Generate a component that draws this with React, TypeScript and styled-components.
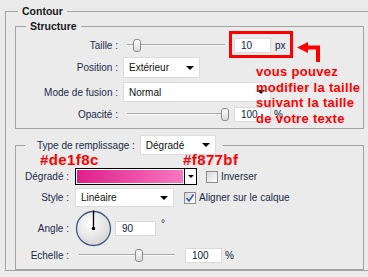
import React from 'react';
import styled, { createGlobalStyle } from 'styled-components';

const GlobalStyle = createGlobalStyle`
    html, body {
        margin: 0;
        padding: 0;
        background: #ebebeb;
        overflow: hidden;
    }
    body {
        font-family: 'Liberation Sans', Arial, sans-serif;
        font-size: 10px;
        color: #1b2a4a;
    }
`;

const Page = styled.div`
    position: relative;
    width: 368px;
    height: 277px;
    padding-top: 4px;
    box-sizing: border-box;
    overflow: hidden;
`;

const Outer = styled.fieldset`
    margin: 0 0 0 5px;
    padding: 1px 0 0 9px;
    width: 372px;
    box-sizing: border-box;
    border: 1px solid #a3a3a3;
    min-inline-size: 0;
`;

const Group = styled.fieldset<{ $top?: number; $bottom?: number }>`
    margin: ${p => p.$top || 0}px 0 0 0;
    padding: 0 0 ${p => p.$bottom || 0}px 0;
    width: 349px;
    box-sizing: border-box;
    border: 1px solid #a3a3a3;
    min-inline-size: 0;
`;

const Legend = styled.legend<{ $indent: number }>`
    margin-left: ${p => p.$indent}px;
    padding: 0 4px;
    font-weight: bold;
    font-size: 10.5px;
    line-height: 14px;
    color: #1a1a1a;
`;

const FillLegend = styled.legend`
    margin-left: 9px;
    padding: 0 7px 0 12px;
    display: flex;
    align-items: center;
    gap: 5px;
    height: 20px;
`;

const Row = styled.div<{ $h: number; $mt: number }>`
    display: flex;
    align-items: center;
    height: ${p => p.$h}px;
    margin-top: ${p => p.$mt}px;
`;

const Label = styled.span<{ $w: number }>`
    flex-shrink: 0;
    width: ${p => p.$w}px;
    margin-right: ${p => (p.$w > 80 ? 5 : 6)}px;
    text-align: right;
    white-space: nowrap;
`;

const SliderBox = styled.div<{ $w: number }>`
    position: relative;
    width: ${p => p.$w}px;
    height: 15px;
    flex-shrink: 0;
`;

const Track = styled.div`
    position: absolute;
    left: 4px;
    right: 4px;
    top: 6px;
    height: 1px;
    background: #a9a9a9;
    border-bottom: 1px solid #fafafa;
`;

const Thumb = styled.div`
    position: absolute;
    top: 1px;
    width: 8px;
    height: 13px;
    box-sizing: border-box;
    border: 1px solid #8c8c8c;
    border-radius: 3px;
    background: linear-gradient(#ffffff, #d9d9d9);
`;

const Field = styled.div<{ $w: number; $ml: number }>`
    width: ${p => p.$w}px;
    height: 15px;
    margin-left: ${p => p.$ml}px;
    box-sizing: border-box;
    padding-left: 6px;
    background: #fff;
    border: 1px solid #dadada;
    line-height: 13px;
    color: #0f1c3a;
    flex-shrink: 0;
`;

const Unit = styled.span<{ $ml: number; $up?: boolean }>`
    margin-left: ${p => p.$ml}px;
    align-self: ${p => (p.$up ? 'flex-start' : 'center')};
    margin-top: ${p => (p.$up ? 8 : 0)}px;
    color: #0f1c3a;
`;

const Select = styled.div<{ $w: number; $h: number }>`
    position: relative;
    width: ${p => p.$w}px;
    height: ${p => p.$h}px;
    box-sizing: border-box;
    padding-left: 5px;
    background: #fff;
    border: 1px solid #dcdcdc;
    display: flex;
    align-items: center;
    color: #111;
    flex-shrink: 0;
    font-weight: normal;
`;

const Caret = styled.span`
    position: absolute;
    right: 5px;
    top: 50%;
    margin-top: -2px;
    width: 0;
    height: 0;
    border-left: 4px solid transparent;
    border-right: 4px solid transparent;
    border-top: 4px solid #000;
`;

const Picker = styled.div`
    display: flex;
    width: 122px;
    height: 17px;
    box-sizing: border-box;
    border: 1px solid #000;
    background: #fff;
    flex-shrink: 0;
`;

const Swatch = styled.div<{ $from: string; $to: string }>`
    flex: 1;
    margin: 1px;
    background: linear-gradient(to right, ${p => p.$from}, ${p => p.$to});
`;

const PickerButton = styled.div`
    position: relative;
    width: 11px;
    border-left: 1px solid #000;
`;

const SmallCaret = styled.span`
    position: absolute;
    left: 3px;
    top: 6px;
    border-left: 3px solid transparent;
    border-right: 3px solid transparent;
    border-top: 3px solid #000;
`;

const Check = styled.div<{ $ml: number }>`
    width: 12px;
    height: 12px;
    margin-left: ${p => p.$ml}px;
    box-sizing: border-box;
    border: 1px solid #8e8e8e;
    background: linear-gradient(135deg, #d6d6d6, #ffffff);
    flex-shrink: 0;
    display: flex;
    align-items: center;
    justify-content: center;
`;

const CheckText = styled.span`
    margin-left: 3px;
    white-space: nowrap;
`;

const RedBox = styled.div`
    position: absolute;
    left: 229px;
    top: 31px;
    width: 64px;
    height: 27px;
    box-sizing: border-box;
    border: 3px solid #f00;
`;

const Arrow = styled.svg`
    position: absolute;
    left: 296px;
    top: 41px;
`;

const Note = styled.div`
    position: absolute;
    left: 256px;
    top: 64px;
    font: bold 13px/15.5px 'Liberation Sans', Arial, sans-serif;
    letter-spacing: 0.3px;
    color: #f00;
    white-space: pre;
`;

const Hex = styled.div<{ $x: number }>`
    position: absolute;
    left: ${p => p.$x}px;
    top: 152px;
    font: bold 15px/15px 'Liberation Sans', Arial, sans-serif;
    letter-spacing: 0.4px;
    color: #f00;
`;

const Slider = ({ width, at }: { width: number; at: number }) => (
    <SliderBox $w={width}>
        <Track />
        <Thumb style={{ left: Math.round(at * (width - 8)) }} />
    </SliderBox>
);

const Dial = () => (
    <svg width="37" height="37" viewBox="0 0 37 37">
        <defs>
            <radialGradient id="dialFill" cx="40%" cy="35%" r="70%">
                <stop offset="0%" stopColor="#ffffff" />
                <stop offset="100%" stopColor="#d4d4d4" />
            </radialGradient>
        </defs>
        <circle cx="18.5" cy="18.5" r="17" fill="url(#dialFill)" stroke="#44577f" strokeWidth="1.3" />
        <line x1="18.5" y1="18.5" x2="18.5" y2="0.5" stroke="#000" strokeWidth="1.3" />
        <circle cx="18.5" cy="18.5" r="1.7" fill="#000" />
    </svg>
);

const Tick = () => (
    <svg width="10" height="10" viewBox="0 0 10 10">
        <path d="M1.5 5 L4 8 L8.5 1.5" fill="none" stroke="#3d5c9e" strokeWidth="1.6" />
    </svg>
);

const App = () => {
    return (
        <Page>
            <GlobalStyle />
            <Outer>
                <Legend $indent={3}>Contour</Legend>
                <Group $bottom={5}>
                    <Legend $indent={10}>Structure</Legend>
                    <Row $h={17} $mt={4}>
                        <Label $w={102}>Taille :</Label>
                        <Slider width={106} at={0.1} />
                        <Field $w={37} $ml={5}>10</Field>
                        <Unit $ml={4}>px</Unit>
                    </Row>
                    <Row $h={21} $mt={3}>
                        <Label $w={102}>Position :</Label>
                        <Select $w={77} $h={21}>Extérieur<Caret /></Select>
                    </Row>
                    <Row $h={20} $mt={4}>
                        <Label $w={102}>Mode de fusion :</Label>
                        <Select $w={148} $h={20}>Normal<Caret /></Select>
                    </Row>
                    <Row $h={17} $mt={4}>
                        <Label $w={102}>Opacité :</Label>
                        <Slider width={106} at={1} />
                        <Field $w={37} $ml={5}>100</Field>
                        <Unit $ml={3}>%</Unit>
                    </Row>
                </Group>
                <Group $top={6} $bottom={6}>
                    <FillLegend>
                        <span>Type de remplissage :</span>
                        <Select $w={76} $h={20}>Dégradé<Caret /></Select>
                    </FillLegend>
                    <Row $h={17} $mt={13}>
                        <Label $w={53}>Dégradé :</Label>
                        <Picker>
                            <Swatch $from="#de1f8c" $to="#f877bf" />
                            <PickerButton><SmallCaret /></PickerButton>
                        </Picker>
                        <Check $ml={9} />
                        <CheckText>Inverser</CheckText>
                    </Row>
                    <Row $h={19} $mt={3}>
                        <Label $w={53}>Style :</Label>
                        <Select $w={99} $h={19}>Linéaire<Caret /></Select>
                        <Check $ml={10}><Tick /></Check>
                        <CheckText>Aligner sur le calque</CheckText>
                    </Row>
                    <Row $h={37} $mt={3}>
                        <Label $w={53}>Angle :</Label>
                        <Dial />
                        <Field $w={41} $ml={3}>90</Field>
                        <Unit $ml={5} $up>°</Unit>
                    </Row>
                    <Row $h={15} $mt={1}>
                        <Label $w={53}>Echelle :</Label>
                        <Slider width={104} at={0.63} />
                        <Field $w={37} $ml={6}>100</Field>
                        <Unit $ml={3}>%</Unit>
                    </Row>
                </Group>
            </Outer>

            <RedBox />
            <Arrow width="28" height="22" viewBox="0 0 28 22">
                <path d="M1 6.5 L12 1 L12 12 Z M11 4.5 H24 V21 H20 V8.5 H11 Z" fill="#f00" />
            </Arrow>
            <Note>{'vous pouvez\nmodifier la taille\nsuivant la taille\nde votre texte'}</Note>
            <Hex $x={40}>#de1f8c</Hex>
            <Hex $x={183}>#f877bf</Hex>
        </Page>
    );
};

export default App;
